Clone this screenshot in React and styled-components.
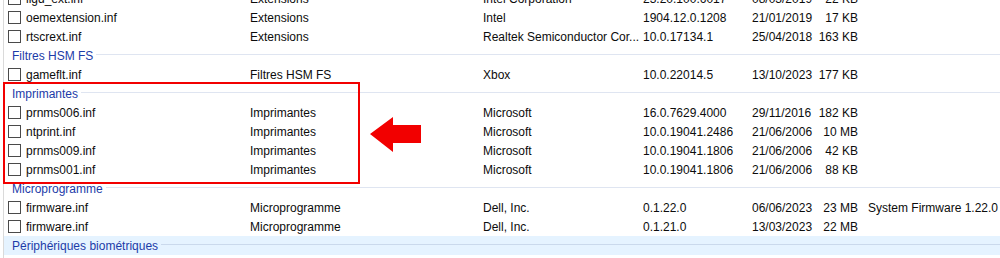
import React from "react"
import styled, { createGlobalStyle } from "styled-components"

const GlobalStyle = createGlobalStyle`
  * {
    box-sizing: border-box;
  }

  html,
  body {
    margin: 0;
    background: #fff;
    overflow: hidden;
  }
`

const Page = styled.div`
  position: relative;
  width: 1000px;
  height: 258px;
  overflow: hidden;
  background: #fff;
  font-family: "Liberation Sans", Arial, sans-serif;
  font-size: 12px;
  color: #0c0c0c;
`

const List = styled.div`
  margin-top: -11px;
  margin-left: 3px;
  border-left: 1px solid #dadada;
  min-height: 290px;
`

const columns = "22px 224px 233px 160px 109px 65px 41px 10px 1fr"

const Row = styled.div`
  display: grid;
  grid-template-columns: ${columns};
  align-items: center;
  height: 19px;
  white-space: nowrap;
`

const CheckCell = styled.div`
  display: flex;
  align-items: center;
  padding-left: 4px;
`

const Box = styled.span`
  display: block;
  width: 13px;
  height: 13px;
  border: 1px solid #4a4a4a;
  background: #fff;
`

const Cell = styled.span`
  overflow: hidden;
  text-overflow: ellipsis;
  text-align: ${(p) => (p.$right ? "right" : "left")};
`

const GroupHeader = styled.div`
  display: flex;
  align-items: center;
  height: 19px;
  padding-left: 8px;
  background: ${(p) => (p.$active ? "#e5f3ff" : "transparent")};
  color: #1c3ba8;
  white-space: nowrap;
`

const HeaderLine = styled.span`
  flex: 1;
  height: 1px;
  margin-left: 3px;
  margin-top: -2px;
  background: ${(p) => (p.$active ? "#cad9ec" : "#dfe5f1")};
`

// annotations drawn on top of the list
const Highlight = styled.div`
  position: absolute;
  left: 3px;
  top: 82px;
  width: 357px;
  height: 102px;
  border: 2px solid #f20000;
  pointer-events: none;
`

const Arrow = styled.svg`
  position: absolute;
  left: 369px;
  top: 116px;
`

const groups = [
  {
    title: null,
    rows: [
      ["ligd_ext.inf", "Extensions", "Intel Corporation", "23.20.100.6017", "08/03/2019", "22 KB"],
      ["oemextension.inf", "Extensions", "Intel", "1904.12.0.1208", "21/01/2019", "17 KB"],
      ["rtscrext.inf", "Extensions", "Realtek Semiconductor Cor...", "10.0.17134.1", "25/04/2018", "163 KB"],
    ],
  },
  {
    title: "Filtres HSM FS",
    rows: [["gameflt.inf", "Filtres HSM FS", "Xbox", "10.0.22014.5", "13/10/2023", "177 KB"]],
  },
  {
    title: "Imprimantes",
    rows: [
      ["prnms006.inf", "Imprimantes", "Microsoft", "16.0.7629.4000", "29/11/2016", "182 KB"],
      ["ntprint.inf", "Imprimantes", "Microsoft", "10.0.19041.2486", "21/06/2006", "10 MB"],
      ["prnms009.inf", "Imprimantes", "Microsoft", "10.0.19041.1806", "21/06/2006", "42 KB"],
      ["prnms001.inf", "Imprimantes", "Microsoft", "10.0.19041.1806", "21/06/2006", "88 KB"],
    ],
  },
  {
    title: "Microprogramme",
    rows: [
      ["firmware.inf", "Microprogramme", "Dell, Inc.", "0.1.22.0", "06/06/2023", "23 MB", "System Firmware 1.22.0"],
      ["firmware.inf", "Microprogramme", "Dell, Inc.", "0.1.21.0", "13/03/2023", "22 MB"],
    ],
  },
  {
    title: "Périphériques biométriques",
    active: true,
    rows: [["goodixfingerprint.inf", "Périphériques biométriques", "Goodix", "3.12.804.38", "08/11/2022", "85 KB"]],
  },
]

const DriverRow = ({ data }) => {
  const [name, type, vendor, version, date, size, desc] = data
  return (
    <Row>
      <CheckCell>
        <Box />
      </CheckCell>
      <Cell>{name}</Cell>
      <Cell>{type}</Cell>
      <Cell>{vendor}</Cell>
      <Cell>{version}</Cell>
      <Cell>{date}</Cell>
      <Cell $right>{size}</Cell>
      <span />
      <Cell>{desc}</Cell>
    </Row>
  )
}

const App = () => {
  return (
    <>
      <GlobalStyle />
      <Page>
        <List>
          {groups.map((group, i) => (
            <React.Fragment key={i}>
              {group.title && (
                <GroupHeader $active={group.active}>
                  {group.title}
                  <HeaderLine $active={group.active} />
                </GroupHeader>
              )}
              {group.rows.map((row, j) => (
                <DriverRow key={j} data={row} />
              ))}
            </React.Fragment>
          ))}
        </List>
        <Highlight />
        <Arrow width="54" height="38" viewBox="0 0 54 38">
          <polygon points="1,18 24,1 24,9 52,9 52,27 24,27 24,36" fill="#f20000" />
        </Arrow>
      </Page>
    </>
  )
}

export default App
